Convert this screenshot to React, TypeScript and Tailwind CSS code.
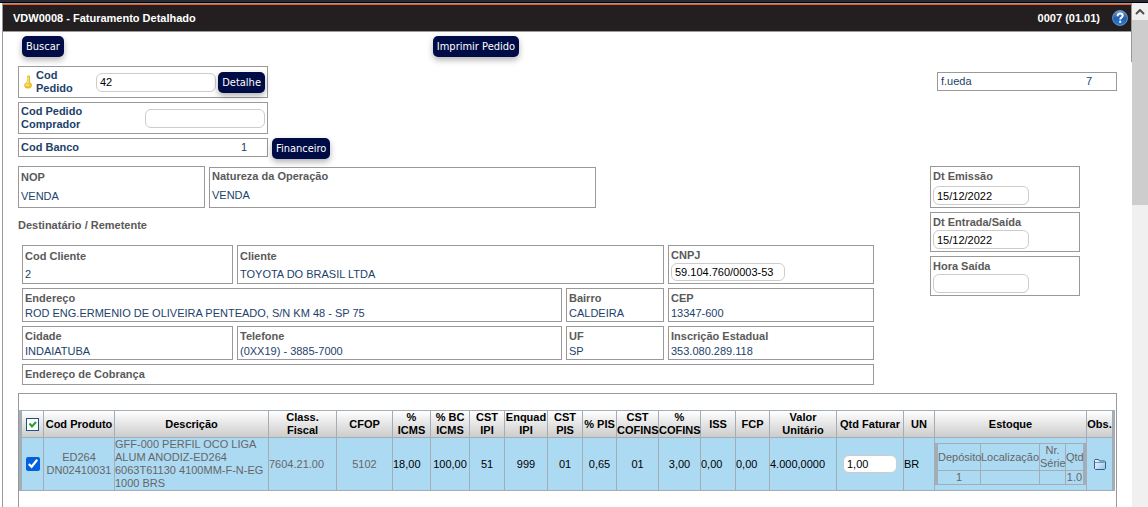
import { useState } from "react";
import type { ReactNode } from "react";

const box = "border border-[#999999] bg-white";
const inputStyle = "block rounded-md border border-[#cccccc] bg-white px-[3px] text-black outline-none";

function NavyButton({ children }: { children: ReactNode }) {
  return (
    <button
      type="button"
      className="h-[21px] shrink-0 whitespace-nowrap rounded-[5px] bg-[#000c46] px-1 font-['DejaVu_Sans_Condensed','DejaVu_Sans',sans-serif] text-[11px] text-white shadow-[0_3px_6px_rgba(0,0,0,0.3)] hover:bg-[#001a7a]"
    >
      {children}
    </button>
  );
}

function Field({ label, value, className = "leading-[15px]" }: { label: string; value?: string; className?: string }) {
  return (
    <dl className={`${box} flex flex-col justify-end px-[2px] ${className}`}>
      <dt className="font-bold text-[#5a5a5a]">{label}</dt>
      {value && <dd className="text-[#1c426b]">{value}</dd>}
    </dl>
  );
}

function DateField({ id, label, initial = "", className }: { id: string; label: string; initial?: string; className: string }) {
  return (
    <div className={`${box} flex w-[150px] flex-col justify-between px-[2px] pb-[2px] pt-[2px] ${className}`}>
      <label htmlFor={id} className="block font-bold leading-[14px] text-[#5a5a5a]">{label}</label>
      <input id={id} type="text" defaultValue={initial} className={`${inputStyle} h-[19px] w-24`} />
    </div>
  );
}

function KeyIcon() {
  return (
    <svg viewBox="0 0 8 14" className="h-[14px] w-2 shrink-0">
      <path d="M3.5 1h2v6l1.8 2v2.6L5.8 13H2.2L.8 11.6V9l2.7-2z" fill="#f5c91b" stroke="#d9a514" strokeWidth=".7" />
      <path d="M4 1.5v6L2 9.5v1.5" fill="none" stroke="#fff3a0" />
      <circle cx="4.3" cy="10.3" r=".8" fill="#fff8d0" />
    </svg>
  );
}

function FolderIcon() {
  return (
    <svg viewBox="0 0 12 11" className="h-[11px] w-3">
      <defs>
        <linearGradient id="folder" x1="0" y1="0" x2="1" y2="1">
          <stop offset="0" stopColor="#ffffff" />
          <stop offset="1" stopColor="#8fbfe9" />
        </linearGradient>
      </defs>
      <path d="M.5 9.5v-8l.5-1h3.5l1 1.5H10.5l1 1v6.5l-1 1h-9z" fill="url(#folder)" stroke="#2d5f91" />
      <path d="M1 3.5h9.5" stroke="#6d9bc8" />
    </svg>
  );
}

function HelpIcon() {
  return (
    <svg viewBox="0 0 16 16" className="h-4 w-4">
      <defs>
        <linearGradient id="help" x1="0" y1="0" x2="0" y2="1">
          <stop offset="0" stopColor="#6d9cd5" />
          <stop offset=".5" stopColor="#2360ac" />
          <stop offset="1" stopColor="#2b7bd2" />
        </linearGradient>
      </defs>
      <circle cx="8" cy="8" r="7.5" fill="url(#help)" stroke="#6f9fd3" strokeWidth=".8" />
      <path d="M5.5 6.2C5.6 4.4 6.6 3.5 8.1 3.5c1.6 0 2.6.9 2.6 2.2 0 1.8-2.5 1.9-2.5 3.9" fill="none" stroke="#fff" strokeWidth="1.9" />
      <rect x="7.2" y="10.7" width="2" height="2" fill="#fff" />
    </svg>
  );
}

type Column = { title: string; width?: string; cell: ReactNode; style: string };

const gray = "text-[#666666]";

const columns: Column[] = [
  { title: "Cod Produto", width: "w-[71px]", cell: "ED264 DN02410031", style: `${gray} text-center` },
  { title: "Descrição", cell: "GFF-000 PERFIL OCO LIGA ALUM ANODIZ-ED264 6063T61130 4100MM-F-N-EG 1000 BRS", style: gray },
  { title: "Class.\nFiscal", width: "w-[68px]", cell: "7604.21.00", style: gray },
  { title: "CFOP", width: "w-[56px]", cell: "5102", style: `${gray} text-center` },
  { title: "% ICMS", width: "w-[38px]", cell: "18,00", style: "" },
  { title: "% BC ICMS", width: "w-[39px]", cell: "100,00", style: "text-center" },
  { title: "CST IPI", width: "w-[35px]", cell: "51", style: "text-center" },
  { title: "Enquad IPI", width: "w-[43px]", cell: "999", style: "text-center" },
  { title: "CST PIS", width: "w-[35px]", cell: "01", style: "text-center" },
  { title: "% PIS", width: "w-[34px]", cell: "0,65", style: "text-center" },
  { title: "CST COFINS", width: "w-[42px]", cell: "01", style: "text-center" },
  { title: "% COFINS", width: "w-[42px]", cell: "3,00", style: "text-center" },
  { title: "ISS", width: "w-[35px]", cell: "0,00", style: "" },
  { title: "FCP", width: "w-[34px]", cell: "0,00", style: "" },
  { title: "Valor Unitário", width: "w-[67px]", cell: "4.000,0000", style: "" },
  {
    title: "Qtd Faturar",
    width: "w-[67px]",
    cell: <input type="text" aria-label="Qtd Faturar" defaultValue="1,00" className={`${inputStyle} mx-auto h-[18px] w-[54px]`} />,
    style: "",
  },
  { title: "UN", width: "w-[31px]", cell: "BR", style: "" },
  { title: "Estoque", width: "w-[152px]", cell: <StockTable />, style: "" },
  {
    title: "Obs.",
    width: "w-[26px]",
    cell: <button type="button" aria-label="Observações" className="mx-auto block"><FolderIcon /></button>,
    style: "",
  },
];

function StockTable() {
  const cell = "border-l border-t border-[#a3adb5] p-0 font-normal";
  return (
    <table className="w-full table-fixed border-separate border-spacing-0 border-b border-l-2 border-r-[3px] border-[#a3adb5] text-center text-[#666666]">
      <thead>
        <tr>
          <th className={`${cell} w-[43px]`}>Depósito</th>
          <th className={cell}>Localização</th>
          <th className={`${cell} w-[26px]`}>Nr. Série</th>
          <th className={`${cell} w-[18px]`}>Qtd</th>
        </tr>
      </thead>
      <tbody>
        <tr>
          <td className={cell}>1</td>
          <td className={cell}></td>
          <td className={cell}></td>
          <td className={cell}>1.0</td>
        </tr>
      </tbody>
    </table>
  );
}

function ItemsTable() {
  const [checked, setChecked] = useState(true);
  const cell = "border-l border-t border-[#a3adb5] p-0";

  return (
    <table className="w-full table-fixed border-separate border-spacing-0 border-b border-l-2 border-r-[3px] border-[#a3adb5] leading-[13px] text-black">
      <thead className="text-center">
        <tr>
          <th className={`${cell} h-[27px] w-[22px] bg-linear-to-b from-white to-[#cccccc]`}>
            <button
              type="button"
              aria-label="Marcar todos"
              onClick={() => setChecked(!checked)}
              className="mx-auto block h-[13px] w-[13px] border border-[#1c5180] bg-white"
            >
              <svg viewBox="0 0 11 11" className="h-[11px] w-[11px]">
                <path d="M2.5 4.5l2.5 3 4-4.5" fill="none" stroke="#21a121" strokeWidth="2" />
              </svg>
            </button>
          </th>
          {columns.map((c) => (
            <th key={c.title} className={`${cell} ${c.width ?? ""} whitespace-pre-line bg-linear-to-b from-white to-[#cccccc] font-bold`}>
              {c.title}
            </th>
          ))}
        </tr>
      </thead>
      <tbody>
        <tr className="bg-[#addaf3]">
          <td className={`${cell} h-[53px]`}>
            <input
              type="checkbox"
              aria-label="Selecionar item"
              checked={checked}
              onChange={(e) => setChecked(e.target.checked)}
              className="mx-auto block h-[14px] w-[14px] accent-[#0060df]"
            />
          </td>
          {columns.map((c) => (
            <td key={c.title} className={`${cell} ${c.style}`}>{c.cell}</td>
          ))}
        </tr>
      </tbody>
    </table>
  );
}

export default function App() {
  return (
    <div className="flex h-screen flex-col overflow-hidden bg-white font-['Liberation_Sans',Arial,sans-serif] text-[11px] leading-[13px]">
      <div className="h-[3px] shrink-0 border-b border-black bg-[#2b2a33]" />
      <div className="flex min-h-0 flex-1">
        <div className="ml-[2px] min-w-0 flex-1 border-l border-t border-[#999999]">
          <header className="flex h-7 items-center border-b border-r border-t border-b-[#999999] border-r-[#999999] border-t-[#f15a29] bg-[#231f20] pl-[10px] pr-[3px] font-bold text-white">
            <h1>VDW0008 - Faturamento Detalhado</h1>
            <span className="ml-auto mr-3">0007 (01.01)</span>
            <button type="button" aria-label="Ajuda"><HelpIcon /></button>
          </header>

          <div className="flex items-start">
            <main className="min-w-0 flex-1 pl-[15px] pr-[14px] pt-1">
              <div className="flex justify-between">
                <div className="w-[856px]">
                  <div className="flex gap-[369px] pl-1">
                    <NavyButton>Buscar</NavyButton>
                    <NavyButton>Imprimir Pedido</NavyButton>
                  </div>

                  <div className="mt-[9px] flex flex-col gap-1 text-[#1c426b]">
                    <div className={`${box} flex h-8 w-[250px] items-center pl-[5px] pr-[2px]`}>
                      <KeyIcon />
                      <label htmlFor="pedido" className="ml-1 w-[60px] font-bold">Cod<br />Pedido</label>
                      <input id="pedido" type="text" defaultValue="42" className={`${inputStyle} mr-[2px] h-[19px] min-w-0 flex-1`} />
                      <NavyButton>Detalhe</NavyButton>
                    </div>
                    <div className={`${box} flex h-8 w-[250px] items-center justify-between px-[2px]`}>
                      <label htmlFor="comprador" className="w-20 font-bold">Cod Pedido Comprador</label>
                      <input id="comprador" type="text" className={`${inputStyle} h-[19px] w-[120px]`} />
                    </div>
                    <div className="flex h-6 items-start gap-1">
                      <dl className={`${box} flex h-[19px] w-[250px] items-center justify-between pl-[2px] pr-5`}>
                        <dt className="font-bold">Cod Banco</dt>
                        <dd>1</dd>
                      </dl>
                      <NavyButton>Financeiro</NavyButton>
                    </div>
                  </div>

                  <div className="mt-1 flex items-end gap-1">
                    <Field label="NOP" value="VENDA" className="h-[42px] w-[187px] pb-px leading-[19px]" />
                    <Field label="Natureza da Operação" value="VENDA" className="h-[41px] w-[387px] pb-[2px] leading-[19px]" />
                  </div>

                  <h2 className="mt-[11px] font-bold text-[#5a5a5a]">Destinatário / Remetente</h2>

                  <div className="ml-1 mt-[13px] grid grid-cols-[211px_1fr_98px_206px] gap-1">
                    <Field label="Cod Cliente" value="2" className="h-[39px] leading-[18px]" />
                    <Field label="Cliente" value="TOYOTA DO BRASIL LTDA" className="col-span-2 leading-[18px]" />
                    <div className={`${box} px-[2px] pt-[2px]`}>
                      <label htmlFor="cnpj" className="block font-bold leading-[15px] text-[#5a5a5a]">CNPJ</label>
                      <input id="cnpj" type="text" defaultValue="59.104.760/0003-53" className={`${inputStyle} h-[18px] w-[114px]`} />
                    </div>
                    <Field label="Endereço" value="ROD ENG.ERMENIO DE OLIVEIRA PENTEADO, S/N KM 48 - SP 75" className="col-span-2 h-[34px] leading-[15px]" />
                    <Field label="Bairro" value="CALDEIRA" />
                    <Field label="CEP" value="13347-600" />
                    <Field label="Cidade" value="INDAIATUBA" className="h-[34px] leading-[15px]" />
                    <Field label="Telefone" value="(0XX19) - 3885-7000" />
                    <Field label="UF" value="SP" />
                    <Field label="Inscrição Estadual" value="353.080.289.118" />
                    <Field label="Endereço de Cobrança" className="col-span-4 h-[21px] leading-[19px]" />
                  </div>
                </div>

                <div className="mt-9 w-[187px]">
                  <div className={`${box} ml-auto flex h-[19px] w-[180px] items-center justify-between pl-[3px] pr-6 text-[#1c426b]`}>
                    <span>f.ueda</span>
                    <span>7</span>
                  </div>
                  <div className="mt-[75px] flex flex-col gap-1">
                    <DateField id="emissao" label="Dt Emissão" initial="15/12/2022" className="h-[42px]" />
                    <DateField id="entrada" label="Dt Entrada/Saída" initial="15/12/2022" className="h-10" />
                    <DateField id="hora" label="Hora Saída" className="h-10" />
                  </div>
                </div>
              </div>

              <section className="mt-2 h-40 border border-[#999999] pr-px pt-4">
                <ItemsTable />
              </section>
            </main>
            <div className="h-[30px] w-px bg-[#999999]" />
          </div>
        </div>

        <div className="flex w-4 shrink-0 flex-col bg-[#f0f0f0]">
          <div className="flex h-[17px] items-center justify-center">
            <svg viewBox="0 0 10 6" className="h-[6px] w-[10px]">
              <path d="M1 5l4-4 4 4" fill="none" stroke="#505050" strokeWidth="2" />
            </svg>
          </div>
          <div className="h-[185px] bg-[#cdcdcd]" />
        </div>
      </div>
    </div>
  );
}
